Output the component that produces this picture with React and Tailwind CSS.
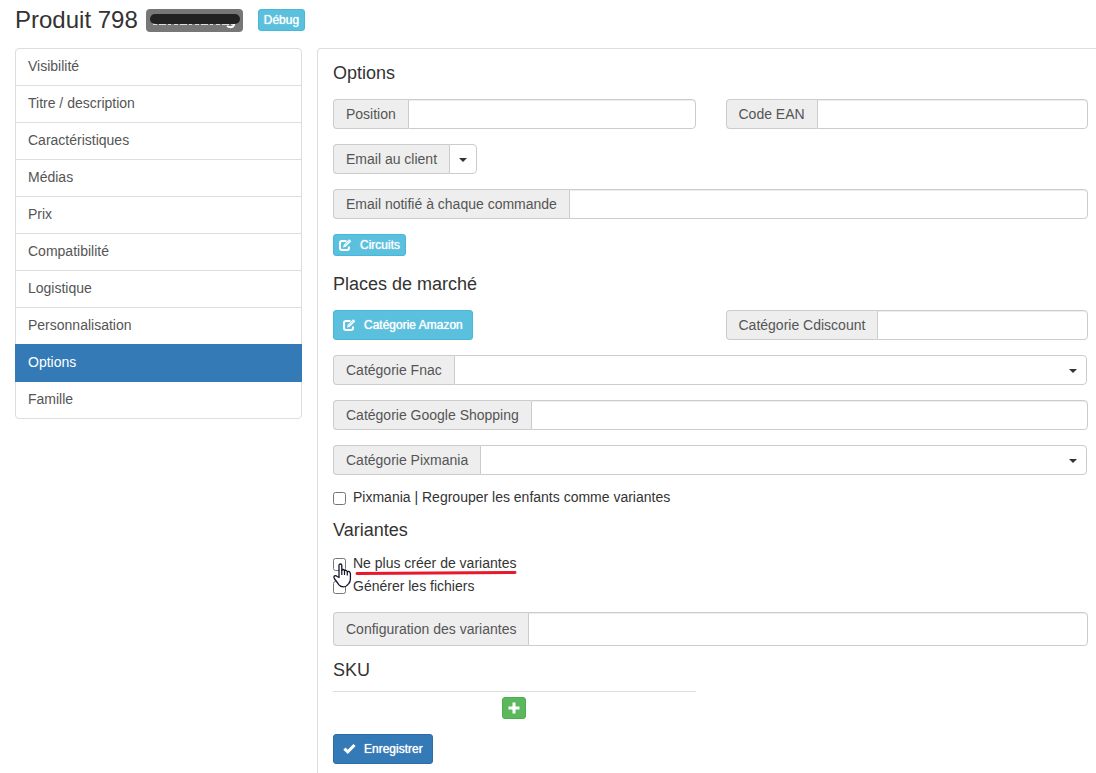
const MENU = [
  'Visibilité',
  'Titre / description',
  'Caractéristiques',
  'Médias',
  'Prix',
  'Compatibilité',
  'Logistique',
  'Personnalisation',
  'Options',
  'Famille',
];

const ADDON = 'flex items-center shrink-0 px-3 border border-r-0 border-[#ccc] rounded-l bg-[#eee] text-[#555]';
const BTN = 'inline-flex items-center rounded-[3px] border text-xs text-white [text-shadow:0_0_1px_#fff]';
const HEADING = 'text-lg leading-[18px]';

function EditIcon() {
  return (
    <svg width="13" height="12" viewBox="0 0 13 12" fill="none" aria-hidden="true">
      <path d="M7.500 1.900H3Q1 1.900 1 3.900V9Q1 11 3 11H8Q10 11 10 9V7.500" stroke="#fff" strokeWidth="2" />
      <path d="M4 8.500L4.800 5.800L10.200 .3L12.300 2.300L6.800 7.800Z" fill="#fff" />
      <path d="M5.800 6.500L10.500 1.800" stroke="#5bc0de" strokeWidth=".5" />
    </svg>
  );
}

function PlusIcon() {
  return (
    <svg width="12" height="12" viewBox="0 0 12 12" fill="#fff" aria-hidden="true">
      <path d="M4.500 .5H7.500V4.500H11.500V7.500H7.500V11.500H4.500V7.500H.5V4.500H4.500Z" />
    </svg>
  );
}

function CheckIcon() {
  return (
    <svg width="13" height="12" viewBox="0 0 13 12" fill="#fff" aria-hidden="true">
      <path d="M.3 6.700L2.500 4.500L4.800 6.700L10.400 1L12.600 3.100L4.800 11Z" />
    </svg>
  );
}

function Caret() {
  return (
    <svg width="8" height="4" viewBox="0 0 8 4" fill="#333" aria-hidden="true">
      <path d="M0 0H8L4 4Z" />
    </svg>
  );
}

function TextField({ id, label, tall }) {
  return (
    <div className={`flex ${tall ? 'h-[34px]' : 'h-[30px]'}`}>
      <label htmlFor={id} className={ADDON}>{label}</label>
      <input
        id={id}
        type="text"
        className="flex-1 min-w-0 px-3 border border-[#ccc] rounded-r bg-white shadow-[inset_0_1px_1px_rgba(0,0,0,0.075)] outline-none"
      />
    </div>
  );
}

function SelectField({ id, label, compact }) {
  return (
    <div className="flex h-[30px] pr-px">
      <label htmlFor={id} className={ADDON}>{label}</label>
      <div className={`relative ${compact ? 'w-7' : 'flex-1'}`}>
        <select
          id={id}
          className="block w-full h-full appearance-none border border-[#ccc] rounded-r bg-white outline-none"
        >
          <option value="" />
        </select>
        <span className="absolute inset-y-0 right-[10px] flex items-center pt-px pointer-events-none">
          <Caret />
        </span>
      </div>
    </div>
  );
}

function CheckField({ id, label, children }) {
  return (
    <div className="relative flex items-center gap-[7px] h-5">
      <input id={id} type="checkbox" className="w-[13px] h-[13px] mt-[3px]" />
      <label htmlFor={id}>{label}</label>
      {children}
    </div>
  );
}

function HandCursor() {
  return (
    <svg className="absolute left-0 top-[10px] z-10" width="19" height="25" viewBox="0 0 19 25" aria-hidden="true">
      <path
        d="M6 14.500V2.600Q6 1 7.400 1T8.800 2.600V7.500Q9 6.300 10.200 6.500T11.500 8Q12 7 13 7.300T14.300 8.800Q15.200 8 16.200 8.600T17.400 10.500V16Q17.400 18.500 15.800 20.500Q13.500 23.800 10.500 23.800Q7.500 23.800 6 21.800Q4 19 1.600 16Q.3 13.800 1.600 12.900Q2.800 12.200 4.200 13.500Z"
        fill="#fff"
        stroke="#14142b"
        strokeWidth="1.300"
        strokeLinejoin="round"
      />
      <path d="M8.800 7V12M11.500 8V12M14.300 8.800V12.500" stroke="#14142b" strokeWidth="1.200" />
    </svg>
  );
}

export default function App() {
  return (
    <div className="min-h-screen flex flex-col bg-white pl-[15px] font-['Liberation_Sans',Arial,sans-serif] text-sm leading-5 text-[#333]">
      <header className="flex items-center h-10 mb-2">
        <h1 className="text-2xl leading-6">Produit 798</h1>
        <span className="relative ml-2 w-[97px] h-[23px] rounded bg-[#777]">
          {/* product name, struck out */}
          <svg className="absolute inset-0" width="97" height="23" viewBox="0 0 97 23" fill="none" aria-hidden="true">
            <path d="M7 15H87" stroke="#fff" strokeWidth="1.500" strokeDasharray="4 2 7 2 3 3" />
            <path d="M81 17Q84 19 87 17.500Q88.500 16.500 88.500 13" stroke="#fff" strokeWidth="2" />
            <path d="M9 10H89" stroke="#222" strokeWidth="10" strokeLinecap="round" />
          </svg>
        </span>
        <button type="button" className={`${BTN} ml-[15px] h-[22px] px-[5px] bg-[#5bc0de] border-[#46b8da]`}>
          Débug
        </button>
      </header>

      <div className="flex flex-1 items-stretch gap-[15px]">
        <nav className="w-[287px] shrink-0">
          {MENU.map((item) => (
            <a
              key={item}
              href="#"
              className={`block -mb-px px-3 pt-[7px] pb-[9px] border first:rounded-t last:rounded-b ${
                item === 'Options'
                  ? 'relative bg-[#337ab7] border-[#337ab7] text-white'
                  : 'border-[#ddd] text-[#555]'
              }`}
            >
              {item}
            </a>
          ))}
        </nav>

        <main className="flex-1 min-w-0 border-t border-l border-[#ddd] rounded-tl pt-[15px] pl-[15px] pr-2 pb-2">
          <form onSubmit={(e) => e.preventDefault()}>
            <h2 className={`${HEADING} mb-[17px]`}>Options</h2>
            <div className="grid grid-cols-2 gap-x-[30px] gap-y-[15px]">
              <TextField id="position" label="Position" />
              <TextField id="ean" label="Code EAN" />
              <div className="col-span-2">
                <SelectField id="email-client" label="Email au client" compact />
              </div>
              <div className="col-span-2">
                <TextField id="email-commande" label="Email notifié à chaque commande" />
              </div>
            </div>
            <div className="flex mt-[15px]">
              <button type="button" className={`${BTN} h-[22px] gap-2 px-[5px] bg-[#5bc0de] border-[#46b8da]`}>
                <EditIcon />
                Circuits
              </button>
            </div>

            <h2 className={`${HEADING} mt-[19px] mb-[17px]`}>Places de marché</h2>
            <div className="grid grid-cols-2 gap-x-[30px] gap-y-[15px]">
              <div className="flex">
                <button type="button" className={`${BTN} h-[30px] gap-2 px-[9px] bg-[#5bc0de] border-[#46b8da]`}>
                  <EditIcon />
                  Catégorie Amazon
                </button>
              </div>
              <TextField id="cdiscount" label="Catégorie Cdiscount" />
              <div className="col-span-2">
                <SelectField id="fnac" label="Catégorie Fnac" />
              </div>
              <div className="col-span-2">
                <TextField id="google" label="Catégorie Google Shopping" />
              </div>
              <div className="col-span-2">
                <SelectField id="pixmania" label="Catégorie Pixmania" />
              </div>
            </div>
            <div className="mt-3">
              <CheckField id="regrouper" label="Pixmania | Regrouper les enfants comme variantes" />
            </div>

            <h2 className={`${HEADING} mt-[14px] mb-[14px]`}>Variantes</h2>
            <div className="flex flex-col gap-[3px] mb-4">
              <CheckField id="ne-plus-creer" label="Ne plus créer de variantes">
                <svg className="absolute left-[22px] top-[17px]" width="162" height="6" viewBox="0 0 162 6" aria-hidden="true">
                  <path d="M2 3.500Q80 3 160 2.500" fill="none" stroke="#e8192c" strokeWidth="3" strokeLinecap="round" />
                </svg>
                <HandCursor />
              </CheckField>
              <CheckField id="generer" label="Générer les fichiers" />
            </div>
            <TextField id="config" label="Configuration des variantes" tall />

            <h2 className={`${HEADING} mt-[15px] mb-3`}>SKU</h2>
            <div className="grid grid-cols-2 gap-x-[30px]">
              <div className="flex justify-center border-t border-[#ddd] pt-[5px]">
                <button
                  type="button"
                  aria-label="Ajouter un SKU"
                  className={`${BTN} justify-center w-6 h-[22px] bg-[#5cb85c] border-[#4cae4c]`}
                >
                  <PlusIcon />
                </button>
              </div>
            </div>
            <div className="flex mt-[15px]">
              <button type="submit" className={`${BTN} h-[30px] gap-2 px-[9px] bg-[#337ab7] border-[#2e6da4]`}>
                <CheckIcon />
                Enregistrer
              </button>
            </div>
          </form>
        </main>
      </div>
    </div>
  );
}
